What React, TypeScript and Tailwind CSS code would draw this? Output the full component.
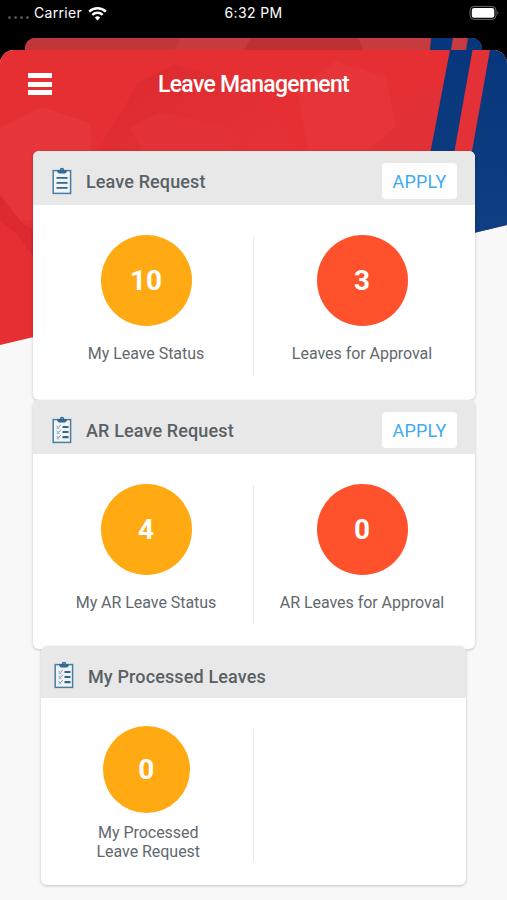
type Stat = {
    label: string
    value: number
    color: string
}

type LeaveCardProps = {
    title: string
    checklist?: boolean
    apply?: boolean
    compact?: boolean
    stats: Stat[]
}

const ClipboardIcon = ({ checklist }: { checklist?: boolean }) => (
    <svg width="20" height="28" viewBox="0 0 20 28" fill="none" className="shrink-0">
        <rect x="1.2" y="3.6" width="17.4" height="22.8" fill="#f1f4f6" stroke="#4d7da0" strokeWidth="1.5" />
        <path d="M5.2 3h2.6C8 1.6 8.8.8 10 .8s2 .8 2.2 2.2h2.6v1.9l-1.7 1.7H6.9L5.2 4.9z" fill="#316b94" />
        <path d="M8.6 2.9c.3-1 2.5-1 2.8 0z" fill="#79a8c6" />
        {checklist ? (
            <>
                <path d="M10.5 11h6M10.5 16h6M10.5 21.2h6" stroke="#34658d" strokeWidth="2.2" />
                <path
                    d="M4.6 10.2l1.5 1.3 2.7-2.4M4.6 15.2l1.5 1.3 2.7-2.4M4.6 20.4l1.5 1.3 2.7-2.4"
                    stroke="#6f8fa5"
                    strokeWidth="1"
                />
                <path d="M4.5 12.6h3M4.5 17.6h3M4.5 22.8h3" stroke="#93abbb" strokeWidth=".8" />
            </>
        ) : (
            <path d="M5.2 10.9h9.7M5.2 15.9h9.7M5.2 20.9h9.7" stroke="#34658d" strokeWidth="1.7" strokeLinecap="round" />
        )}
    </svg>
)

const StatusBar = () => (
    <div className="relative grid h-[38px] shrink-0 grid-cols-3 items-start px-2 pt-1 text-[15px] leading-[18px] text-white">
        <div className="flex items-center">
            <div className="mt-[9px] flex gap-[3px]">
                {[0, 1, 2, 3].map((dot) => (
                    <span key={dot} className="size-[3px] rounded-full bg-[#505050]" />
                ))}
            </div>
            <span className="ml-[5px] font-[Inter,sans-serif] text-[14px] tracking-[0.3px]">Carrier</span>
            <svg width="19" height="15" viewBox="0 0 19 15" fill="none" className="ml-1.5" stroke="#fff">
                <path d="M1.2 5.7a11.8 11.8 0 0 1 16.6 0" strokeWidth="2.4" />
                <path d="M4.3 8.9a7.4 7.4 0 0 1 10.4 0" strokeWidth="2.3" />
                <path d="M9.5 14.4L6.8 11.6a3.9 3.9 0 0 1 5.4 0z" fill="#fff" stroke="none" />
            </svg>
        </div>
        <span className="text-center font-[Inter,sans-serif] text-[14px] tracking-[0.4px]">6:32 PM</span>
        <svg width="30" height="15" viewBox="0 0 30 15" fill="none" className="mt-[1px] justify-self-end">
            <rect x="1" y="1.4" width="26" height="13" rx="4" stroke="#6b6b6b" />
            <rect x="2.8" y="3.1" width="22.5" height="9.6" rx="2.3" fill="#fff" />
            <path d="M28.3 6.2c1.4.6 1.4 2.8 0 3.4z" fill="#6b6b6b" />
        </svg>
    </div>
)

// Red hexagon backdrop with the slanted flag stripes
const Backdrop = () => (
    <svg className="absolute inset-0" width="507" height="900" viewBox="0 0 507 900">
        <defs>
            <clipPath id="back-sheet">
                <path d="M25 50V48a10 10 0 0 1 10-10H472a10 10 0 0 1 10 10V50z" />
            </clipPath>
            <clipPath id="front-sheet">
                <path d="M0 900V64a14 14 0 0 1 14-14H493a14 14 0 0 1 14 14V900z" />
            </clipPath>
            <linearGradient id="navy" x1="0" y1="0" x2="0" y2="1">
                <stop offset="0" stopColor="#08367c" />
                <stop offset="1" stopColor="#103f82" />
            </linearGradient>
            <linearGradient id="shade" x1="0" y1="0" x2="1" y2="0.6">
                <stop offset="0" stopColor="#dc2a2e" />
                <stop offset="1" stopColor="#e43136" />
            </linearGradient>
        </defs>
        <rect width="507" height="100" fill="#000" />
        <g clipPath="url(#back-sheet)">
            <rect x="25" y="38" width="457" height="12" fill="#c73a3d" />
            <path d="M25 38H181L174 50H25z" fill="#c0363a" />
            <path d="M251 38h107l5 12H244z" fill="#bd3033" />
            <path d="M431 38h60v12h-61z" fill="#08367c" />
            <path d="M453 38h15l-2 12h-15z" fill="#c83b41" />
        </g>
        <g clipPath="url(#front-sheet)">
            <rect y="50" width="507" height="850" fill="#f8f8f8" />
            <path d="M0 50H507V225L0 345z" fill="#e62f32" />
            <path d="M0 128L42 107L90 123L92 170L60 220H0z" fill="#e6363a" />
            <path d="M126 104L137 83L175 64L253 87L300 151H97z" fill="url(#shade)" />
            <path d="M130 128L160 112L235 130L238 151H142z" fill="#e33237" />
            <path d="M297 89L336 61L386 77L396 127L366 151H308z" fill="#e63438" />
            <path d="M396 101L445 87L434 151H370L396 127z" fill="#e23136" />
            <path d="M0 195L22 223L33 230V257L17 234L0 221z" fill="#dc2a30" />
            <path d="M450 50H507V225L412 248z" fill="url(#navy)" />
            <path d="M472.5 50H490L472 151H454.5z" fill="#e43137" />
        </g>
    </svg>
)

const LeaveCard = ({ title, checklist, apply, compact, stats }: LeaveCardProps) => (
    <section
        className={`relative overflow-hidden rounded-[6px] bg-white shadow-[0_1px_3px_rgba(0,0,0,0.22)] ${
            compact ? '-mt-[3px] ml-[41px] h-[239px] w-[425px]' : 'ml-[33px] h-[249px] w-[442px]'
        }`}
    >
        <header
            className={`flex items-center bg-[#e8e8e8] ${
                compact ? 'h-[52px] pr-3 pl-[13px] pt-2' : 'h-[54px] pr-[18px] pl-[19px] pt-[6px]'
            }`}
        >
            <div className={compact ? '-mt-0.5' : '-mt-px'}>
                <ClipboardIcon checklist={checklist} />
            </div>
            <h2 className="ml-3.5 pt-px text-[18px] leading-6 font-medium tracking-[0.13px] text-[#596166]">{title}</h2>
            {apply && (
                <button className="ml-auto h-9 w-[75px] rounded-[4px] bg-white text-[18px] tracking-[0.2px] text-[#42aaf0]">
                    APPLY
                </button>
            )}
        </header>
        <div className={`grid grid-cols-2 ${compact ? 'pt-7' : 'px-[5px] pt-[30px]'}`}>
            {stats.map((stat, index) => (
                <div key={stat.label} className={`relative flex flex-col items-center ${compact ? '-ml-[2px]' : ''}`}>
                    <div
                        className={`flex items-center justify-center rounded-full text-[28px] font-bold text-white ${stat.color} ${
                            compact ? 'size-[87px]' : 'size-[91px]'
                        }`}
                    >
                        {stat.value}
                    </div>
                    <p
                        className={`text-center text-[16px] tracking-[-0.04px] text-[#62686d] ${
                            compact ? 'mt-[11px] ml-1 w-[120px] leading-[18.5px]' : 'mt-4 leading-6'
                        }`}
                    >
                        {stat.label}
                    </p>
                    {index === 0 && (
                        <span className={`absolute right-0 w-px bg-[#eaeaea] ${compact ? 'top-[3px] h-[133px]' : 'top-0.5 h-[139px]'}`} />
                    )}
                </div>
            ))}
        </div>
    </section>
)

const App = () => (
    <div className="relative flex h-[900px] w-[507px] flex-col overflow-hidden bg-[#f8f8f8] font-[Roboto,sans-serif]">
        <Backdrop />
        <StatusBar />
        <div className="relative mt-3 grid h-[101px] shrink-0 grid-cols-3 pt-[20px]">
            <button className="mt-[3px] ml-7 flex h-[22px] w-6 flex-col justify-between" aria-label="Menu">
                <span className="h-[5px] w-full bg-white" />
                <span className="h-[5px] w-full bg-white" />
                <span className="h-[5px] w-full bg-white" />
            </button>
            <h1 className="mt-px justify-self-center text-[23px] leading-7 font-medium tracking-[-0.7px] whitespace-nowrap text-white">
                Leave Management
            </h1>
        </div>
        <main className="flex flex-col">
            <LeaveCard
                title="Leave Request"
                apply
                stats={[
                    { label: 'My Leave Status', value: 10, color: 'bg-[#ffaa13]' },
                    { label: 'Leaves for Approval', value: 3, color: 'bg-[#ff512b]' },
                ]}
            />
            <LeaveCard
                title="AR Leave Request"
                checklist
                apply
                stats={[
                    { label: 'My AR Leave Status', value: 4, color: 'bg-[#ffaa13]' },
                    { label: 'AR Leaves for Approval', value: 0, color: 'bg-[#ff512b]' },
                ]}
            />
            <LeaveCard
                title="My Processed Leaves"
                checklist
                compact
                stats={[{ label: 'My Processed Leave Request', value: 0, color: 'bg-[#ffaa13]' }]}
            />
        </main>
    </div>
)

export default App
